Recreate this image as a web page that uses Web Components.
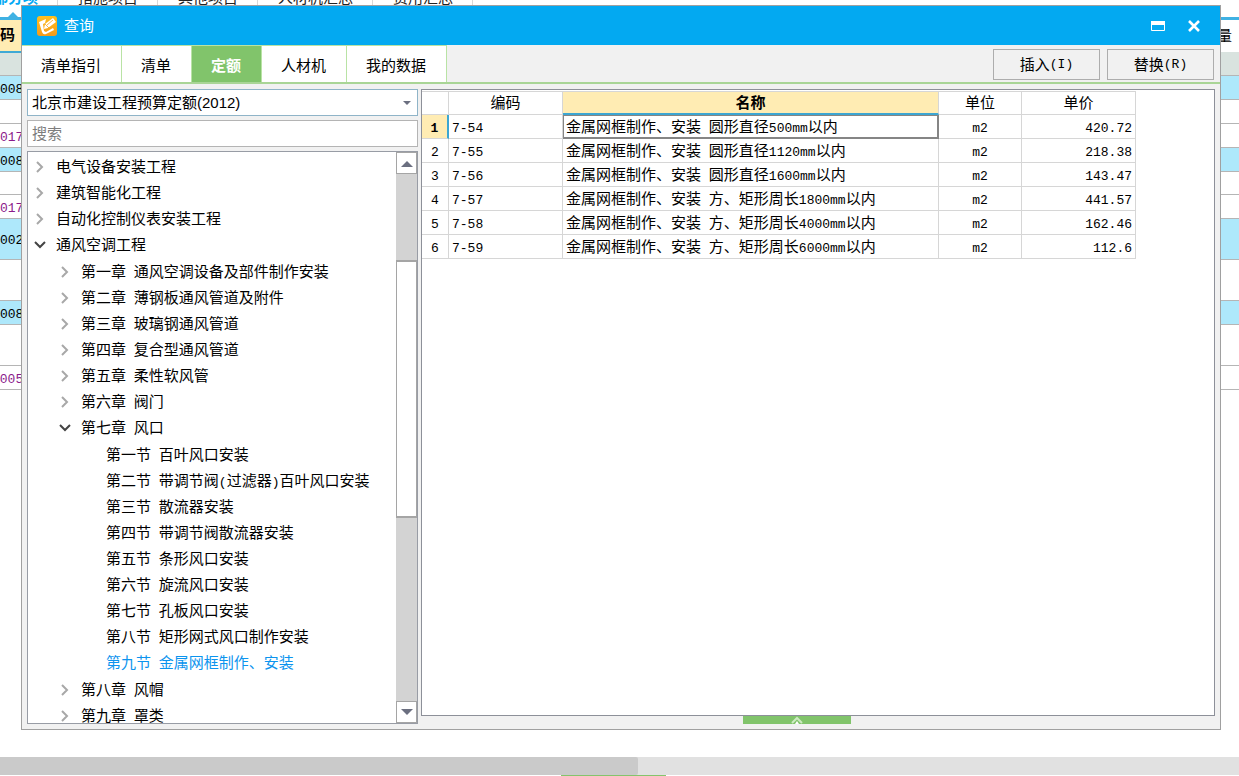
<!DOCTYPE html>
<html lang="zh-CN">
<head>
<meta charset="utf-8">
<title>查询</title>
<style>
html,body{height:100%}
body{margin:0;background:#fff;color:#000;font:15px/20px "Liberation Sans","Noto Sans CJK SC",sans-serif;overflow:hidden}
</style>
</head>
<body>
<query-app></query-app>
<script>
// Latin runs inside Chinese labels are set in the narrow monospace face.
const mix = t => t.replace(/[ -~]+/g, m => `<span class="n">${m}</span>`);
const NARROW = '.n{font:13px/1 "Liberation Mono",monospace;white-space:pre}';
const BASE = `*{box-sizing:border-box}button,input,select{font:inherit;color:inherit;margin:0}ul{list-style:none;margin:0;padding:0}${NARROW}`;
const define = (name, css, html) => customElements.define(name, class extends HTMLElement {
  constructor() {
    super();
    const root = this.attachShadow({mode: 'open'});
    root.innerHTML = `<style>${BASE}${css}</style>${html}`;
  }
});

// The estimate sheet behind the dialog
const sheetRows = [['','gray',24],['008','blue',24],['','',24],['017','buy',24],['008','blue',24],['','',23],['017','buy',24],['002','blue',41],['','',41],['008','blue',24],['','',41],['-005','buy',24]];
define('estimate-sheet', `
:host{display:flex;flex-direction:column;height:100%;overflow:hidden}
nav{display:flex;height:17px;margin-left:-42px;align-items:flex-end;overflow:hidden}
nav a{flex:none;height:30px;line-height:22px;padding:0 19px 0 20px;color:#222;text-decoration:none;white-space:nowrap;border-right:1px solid #d8d8d8}
nav a.on{position:relative;color:#03a9f4;font-weight:bold}
nav a.on::after{content:"";position:absolute;left:50%;bottom:0;border:5px solid transparent;border-top:0;border-bottom-color:#3fb1e3}
table{width:100%;border-collapse:collapse;table-layout:fixed;border-top:3px solid #3fb1e3}
th,td{padding:0;overflow:hidden;white-space:nowrap;border-bottom:1px solid #b5b5b5;text-align:left}
th{height:33px;font-weight:normal;border-bottom:0}
th.code{background:#ffecb3;font-weight:bold;border-bottom:2px solid #3fa9d5}
.gray{background:#d9e3df}.blue{background:#aee8fb}
.buy td{color:#8b1a8b}
.buy:last-child td{text-indent:-8px}
.bar{margin-top:auto;background:#e1e1e1;height:18px}
.bar i{display:block;height:18px;width:51.5%;background:#cacaca;border-radius:0 2px 2px 0}
.grip{height:1px;width:105px;background:#85c46c;margin-left:45.3%}`,
`<nav><a class="on" href="#">分部分项</a><a href="#">措施项目</a><a href="#">其他项目</a><a href="#">人材机汇总</a><a href="#">费用汇总</a></nav>
<table><colgroup><col style="width:22px"><col><col style="width:22px"></colgroup>
<thead><tr><th class="code">码</th><th></th><th>量</th></tr></thead>
<tbody>${sheetRows.map(([t,c,h]) => `<tr class="${c}" style="height:${h}px"><td>${mix(t)}</td><td></td><td></td></tr>`).join('')}</tbody></table>
<div class="bar"><i></i></div><div class="grip"></div>`);

define('title-bar', `
:host{display:flex;align-items:center;height:39px;padding:0 18px 0 15px;background:#03a9f1;color:#fff}
.logo{width:20px;height:20px;margin-right:7px}
h1{margin:0;flex:1;font:inherit}
button{display:flex;border:0;background:none;padding:0;margin-left:21px}`,
`<svg class="logo" viewBox="0 0 20 20"><defs><linearGradient id="g" x2="0" y2="1"><stop stop-color="#ffc01c"/><stop offset="1" stop-color="#f59a1b"/></linearGradient></defs><rect width="20" height="20" rx="3" fill="url(#g)"/><path d="m2 6 7-3-1 4-2 1 1 7 2 1 7-4 1 2-8 4q-3 1-4-2z" fill="#fff"/><path d="m7 13 1-5 8-6 3 4-8 6z" fill="#fff"/><path d="m8 8 4 4m-2-3 6-5" stroke="#f6a51c" stroke-width=".8"/></svg>
<h1><slot></slot></h1>
<button aria-label="最大化"><svg width="14" height="14"><path d="M.5 2.500h13v9H.5z" fill="none" stroke="#fff"/><path d="M0 2h14v4H0z" fill="#fff"/></svg></button>
<button aria-label="关闭"><svg width="16" height="14"><path d="m3 2 10 10M13 2 3 12" stroke="#fff" stroke-width="2.6"/></svg></button>`);

define('tab-bar', `
:host{display:flex;height:39px;background:#f1f1f1;border-bottom:2px solid #a9d596;padding-right:6px}
button.tab{border:0;border-right:1px solid #b9e3a5;border-top:1px solid #b9e3a5;background:#fff;padding:3px 20px 0 19px}
button.tab.on{background:#81c46b;color:#fff;font-weight:bold}
.acts{margin-left:auto;display:flex;gap:7px;padding:4px 0 2px}
.acts button{width:107px;border:1px solid #adadad;background:#f1f1f1;padding:0;display:flex;align-items:center;justify-content:center}`,
`${['清单指引','清单','定额','人材机','我的数据'].map(t => `<button class="tab${t === '定额' ? ' on' : ''}">${t}</button>`).join('')}
<div class="acts"><button>${mix('插入(I)')}</button><button>${mix('替换(R)')}</button></div>`);

const ch = t => ({t});
const tree = [ch('电气设备安装工程'), ch('建筑智能化工程'), ch('自动化控制仪表安装工程'), {t:'通风空调工程', kids:[
  ch('第一章 通风空调设备及部件制作安装'), ch('第二章 薄钢板通风管道及附件'), ch('第三章 玻璃钢通风管道'), ch('第四章 复合型通风管道'), ch('第五章 柔性软风管'), ch('第六章 阀门'),
  {t:'第七章 风口', kids:['第一节 百叶风口安装','第二节 带调节阀(过滤器)百叶风口安装','第三节 散流器安装','第四节 带调节阀散流器安装','第五节 条形风口安装','第六节 旋流风口安装','第七节 孔板风口安装','第八节 矩形网式风口制作安装','第九节 金属网框制作、安装'].map(t => ({t, leaf:true}))},
  ch('第八章 风帽'), ch('第九章 罩类')]}];
const branch = nodes => `<ul>${nodes.map(n => `<li><div class="row${n.t.startsWith('第九节') ? ' sel' : ''}">${n.leaf ? '<i></i>' : n.kids
  ? '<svg width="14" height="14"><path d="m2 4 5 5 5-5" fill="none" stroke="#444" stroke-width="2"/></svg>'
  : '<svg width="14" height="14"><path d="m4 2 5 5-5 5" fill="none" stroke="#a8a8a8" stroke-width="2"/></svg>'}<span>${mix(n.t)}</span></div>${n.kids ? branch(n.kids) : ''}</li>`).join('')}</ul>`;
define('quota-tree', `
:host{display:flex;flex:1;min-height:0;border:1px solid #989ca5;background:#fff}
.list{flex:1;min-width:0;overflow:hidden;padding:2px 0 0 5px}
ul ul{padding:1px 0 1px 25px}
.row{display:flex;align-items:center;height:26px;white-space:nowrap}
.row svg,.row i{flex:none;width:14px;height:14px;margin-right:9px}
.sel{color:#0c94ee}
.scroll{width:21px;flex:none;display:flex;flex-direction:column;background:#d3d3d3}
.scroll button{flex:none;height:22px;border:1px solid #a5a5a5;background:#fff;padding:0;display:flex;align-items:center;justify-content:center}
.thumb{height:45.2%;background:#fff;border:1px solid #a5a5a5;border-top-width:2px;border-bottom-width:2px}
.above{height:15%}.below{flex:1}`,
`<div class="list">${branch(tree)}</div>
<div class="scroll"><button aria-label="向上"><svg width="12" height="7"><path d="m0 7 6-6 6 6z" fill="#6b6f80"/></svg></button><div class="above"></div><div class="thumb"></div><div class="below"></div><button aria-label="向下"><svg width="12" height="7"><path d="m0 0 6 6 6-6z" fill="#6b6f80"/></svg></button></div>`);

define('quota-panel', `
:host{display:flex;flex-direction:column;gap:4px;min-height:0}
.pick{position:relative;display:flex}
select{appearance:none;width:100%;height:27px;border:1px solid #8fb4c8;border-radius:0;background:#fff;padding:0 20px 0 4px}
.pick svg{position:absolute;right:7px;top:12px;pointer-events:none}
input{width:100%;height:27px;border:1px solid #b4b4b4;background:#fff;padding:0 4px}
input::placeholder{color:#7d7d7d}`,
`<div class="pick"><select aria-label="定额库"><option>北京市建设工程预算定额(2012)</option></select><svg width="8" height="4"><path d="M0 0h8L4 4z" fill="#6b6f80"/></svg></div>
<input type="search" placeholder="搜索" aria-label="搜索"><quota-tree></quota-tree>`);

const items = [['7-54','圆形直径500mm以内','420.72'],['7-55','圆形直径1120mm以内','218.38'],['7-56','圆形直径1600mm以内','143.47'],['7-57','方、矩形周长1800mm以内','441.57'],['7-58','方、矩形周长4000mm以内','162.46'],['7-59','方、矩形周长6000mm以内','112.6']];
define('quota-grid', `
:host{display:flex;flex-direction:column;min-width:0}
.box{flex:1;border:1px solid #8d9099;background:#fff;overflow:hidden;padding-top:1px}
table{border-collapse:separate;border-spacing:0;table-layout:fixed;width:714px}
th,td{height:24px;line-height:20px;padding:0 3px;border:0 solid #d6d6d6;border-width:0 1px 1px 0;font-weight:normal;text-align:left;white-space:nowrap;overflow:hidden}
thead th{text-align:center;border-top-width:1px}
thead .hot{background:#ffecb3;font-weight:bold;border-bottom:2px solid #3ca6d2}
tbody th{text-align:center;padding-left:0;padding-right:0}
tbody .hot{background:#ffecb3;border-right:2px solid #3ca6d2}
.hot .n{font-weight:bold}
td.cur{border:1px solid #858585;border-right-width:2px;border-bottom-width:2px;padding:0 2px}
td.c{text-align:center}td.r{text-align:right}
.grip{display:flex;justify-content:center;width:108px;height:8px;margin-left:40.5%;border:0;background:#81c46b;padding:0}`,
`<div class="box"><table><colgroup><col style="width:27px"><col style="width:114px"><col style="width:376px"><col style="width:83px"><col style="width:114px"></colgroup>
<thead><tr><th></th><th>编码</th><th class="hot">名称</th><th>单位</th><th>单价</th></tr></thead>
<tbody>${items.map((r, i) => `<tr><th${i ? '' : ' class="hot"'}>${mix(String(i + 1))}</th><td>${mix(r[0])}</td><td${i ? '' : ' class="cur"'}>${mix('金属网框制作、安装 ' + r[1])}</td><td class="c">${mix('m2')}</td><td class="r">${mix(r[2])}</td></tr>`).join('')}</tbody></table></div>
<button class="grip" aria-label="展开"><svg width="12" height="8"><path d="m1 7 5-5 5 5" fill="none" stroke="#cdebc2" stroke-width="2"/><path d="m4 8 2-3 2 3z" fill="#fff"/></svg></button>`);

define('query-dialog', `
:host{display:flex;flex-direction:column;border:1px solid #a0a0a0;background:#f1f1f1}
main{flex:1;min-height:0;display:grid;grid-template-columns:391px minmax(0,1fr);gap:3px;padding:5px}`,
`<title-bar><slot></slot></title-bar><tab-bar></tab-bar><main><quota-panel></quota-panel><quota-grid></quota-grid></main>`);

// The dialog floats over the sheet
define('query-app', `
:host{display:block;position:relative;height:100%}
query-dialog{position:absolute;inset:5px 18px 46px 21px}`,
`<estimate-sheet></estimate-sheet><query-dialog>查询</query-dialog>`);
</script>
</body>
</html>
